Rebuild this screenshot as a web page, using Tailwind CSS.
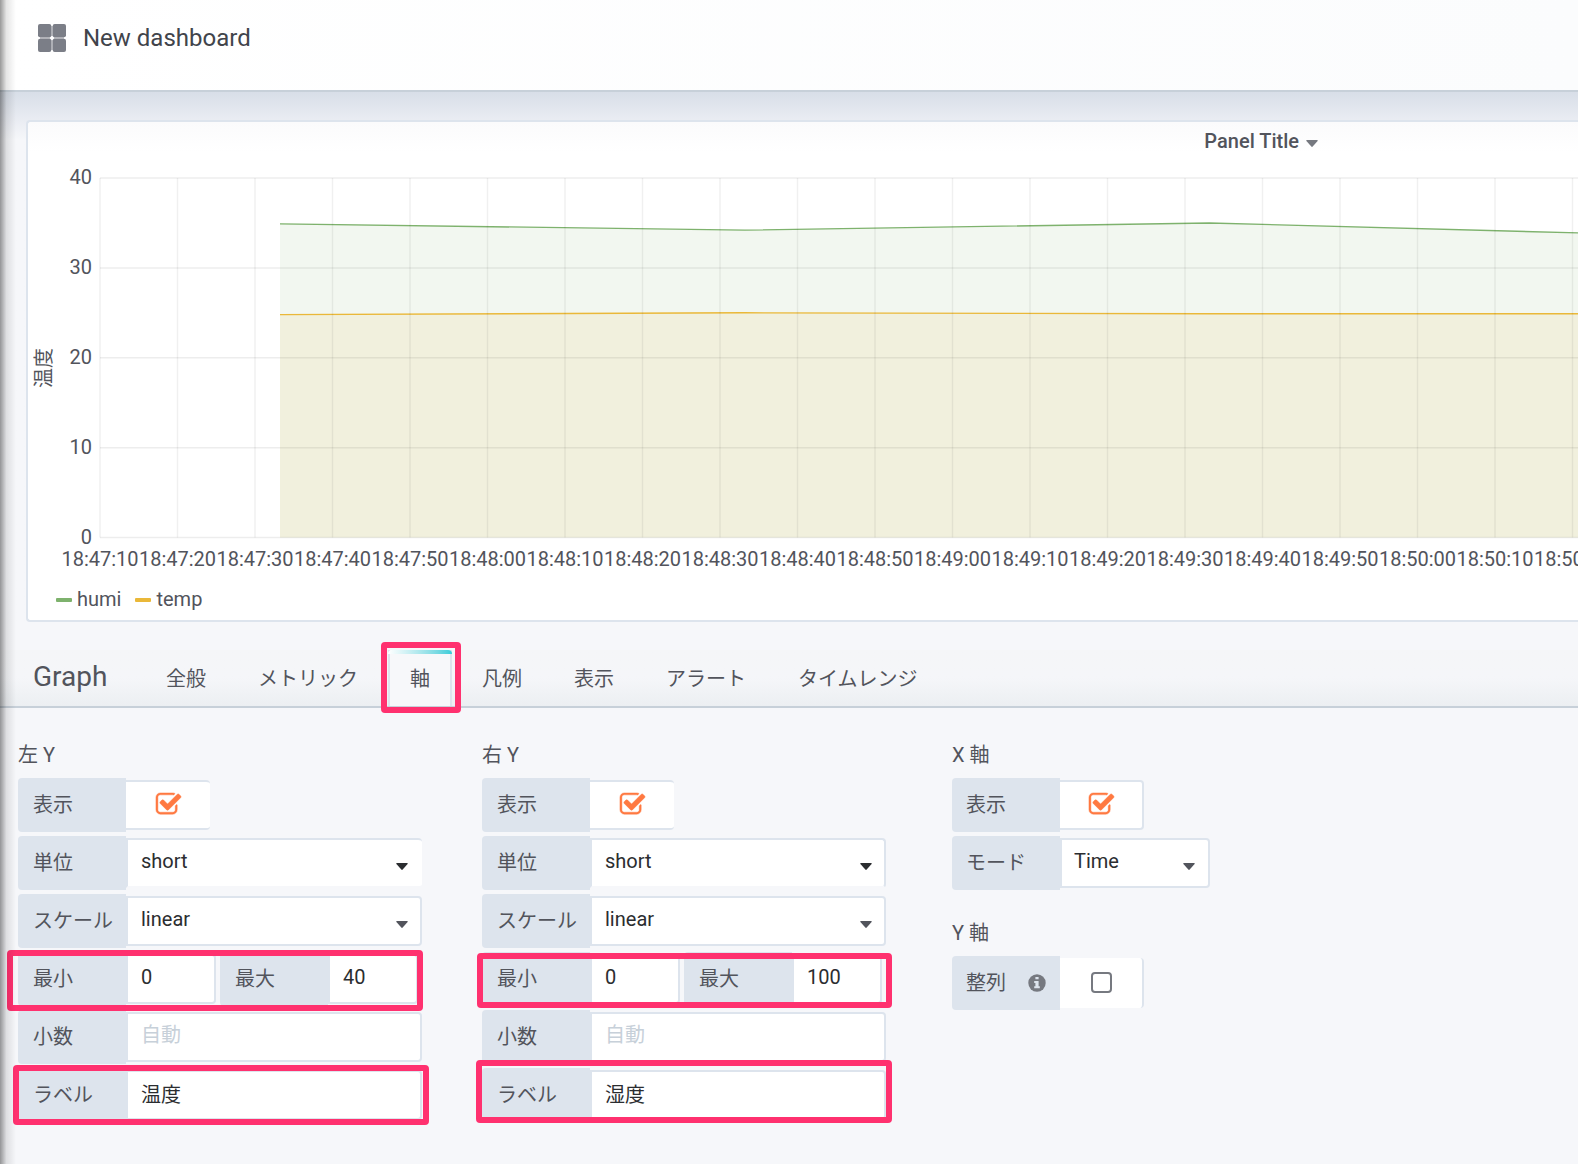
<!DOCTYPE html>
<html lang="ja">
<head>
<meta charset="utf-8">
<meta name="viewport" content="width=device-width, initial-scale=1">
<title>New dashboard</title>
<script src="https://cdn.jsdelivr.net/npm/@tailwindcss/browser@4"></script>
</head>
<body class="relative min-h-screen overflow-x-hidden bg-[#f6f7fa] font-['Roboto','Noto_Sans_CJK_JP',sans-serif] text-xl leading-6 text-[#52545c]">

<svg class="hidden" aria-hidden="true">
  <symbol id="checked" viewBox="0 0 1792 1792"><path fill="currentColor" stroke="currentColor" stroke-width="30" d="M1472 930v318q0 119-84.5 203.5t-203.5 84.5h-832q-119 0-203.5-84.5t-84.5-203.5v-832q0-119 84.5-203.5t203.5-84.5h832q63 0 117 25 15 7 18 23 3 17-9 29l-49 49q-10 10-23 10-3 0-9-2-23-6-45-6h-832q-66 0-113 47t-47 113v832q0 66 47 113t113 47h832q66 0 113-47t47-113v-254q0-13 9-22l64-64q10-10 23-10 6 0 12 3 20 8 20 29zm231-489l-814 814q-24 24-57 24t-57-24l-430-430q-24-24-24-57t24-57l110-110q24-24 57-24t57 24l263 263 647-647q24-24 57-24t57 24l110 110q24 24 24 57t-24 57z"/></symbol>
  <symbol id="caret" viewBox="0 0 12 7"><path fill="currentColor" d="M.8 0h10.400q.8.3.4 1L6.700 6.600q-.7.600-1.400 0L.4 1Q0 .3.8 0z"/></symbol>
</svg>

<header class="flex h-[92px] items-start gap-[17px] border-b-2 border-[#c7d0d9] bg-linear-to-r from-white to-[#fbfcfd] pt-6 pl-[38px]">
  <svg class="h-7 w-7 shrink-0" viewBox="0 0 28 28" aria-hidden="true">
    <path fill="#c3c5c9" d="M2 2h24v24H2z"/><circle cx="14" cy="14" r="2" fill="#fff"/>
    <g fill="#7b7e87"><rect width="13.300" height="13.300" rx="2"/><rect x="14.700" width="13.300" height="13.300" rx="2"/><rect y="14.700" width="13.300" height="13.300" rx="2"/><rect x="14.700" y="14.700" width="13.300" height="13.300" rx="2"/></g>
  </svg>
  <h1 class="text-2xl leading-7 text-[#41444b]">New dashboard</h1>
</header>

<main>
  <div class="bg-linear-to-b from-[#d8dee8] to-[#f6f7fa] to-[48px] pt-7 pl-[26px]">
    <section class="overflow-hidden rounded-l border-2 border-r-0 border-[#dde4ed] bg-linear-to-b from-[#fbfbfc] to-white to-[30px]">
      <div class="flex h-10 items-center justify-end pr-[260px] pb-[2px]">
        <button type="button" class="flex items-center gap-[7px] font-medium">Panel Title
          <svg class="mt-1 h-[7px] w-3 text-[#767980]" aria-hidden="true"><use href="#caret"/></svg>
        </button>
      </div>
      <svg id="chart" class="block h-[416px] w-full" role="img" aria-label="humi / temp" fill="#52545c" font-size="20"></svg>
      <ul class="flex h-[42px] items-center gap-[14px] pl-7">
        <li class="flex items-center gap-[5px]"><span class="mt-[2px] h-1 w-4 rounded-[1px] bg-[#7eb26d]"></span>humi</li>
        <li class="flex items-center gap-[5px]"><span class="mt-[2px] h-1 w-4 rounded-[1px] bg-[#eab839]"></span>temp</li>
      </ul>
    </section>
  </div>

  <div class="mt-7 flex h-[58px] items-stretch border-b-2 border-[#c7d0d9] bg-linear-to-b from-[#f5f6f8] via-[#f5f6f9] to-[#eceff2] pl-[33px]">
    <h2 class="w-[111px] pt-[13px] text-[28px] leading-7">Graph</h2>
    <nav class="flex gap-2 whitespace-nowrap">
      <a href="#" class="flex items-center border-x-2 border-transparent px-5 pt-[2px]">全般</a>
      <a href="#" class="flex items-center border-x-2 border-transparent px-5 pt-[2px]">メトリック</a>
      <a href="#" aria-current="page" class="relative flex items-center border-x-2 border-[#dde4ed] bg-[#f7f8fa] px-5 pt-[2px]">軸
        <span class="absolute -inset-x-[2px] top-0 h-1 rounded-t bg-linear-to-r from-white to-[#35cdd9]"></span>
        <span class="absolute -top-[8px] -left-[9px] h-[71px] w-[80px] rounded border-6 border-[#ff316f]"></span>
      </a>
      <a href="#" class="flex items-center border-x-2 border-transparent px-5 pt-[2px]">凡例</a>
      <a href="#" class="flex items-center border-x-2 border-transparent px-5 pt-[2px]">表示</a>
      <a href="#" class="flex items-center border-x-2 border-transparent px-5 pt-[2px]">アラート</a>
      <a href="#" class="flex items-center border-x-2 border-transparent px-5 pt-[2px]">タイムレンジ</a>
    </nav>
  </div>

  <form class="flex items-start pt-[35px] pb-[42px] pl-[18px]">
    <fieldset class="mr-[60px] flex w-[404px] flex-col gap-1">
      <legend class="mb-[11px] h-6">左 Y</legend>
      <div class="flex h-[54px] items-center">
        <label for="ly-show" class="flex h-full w-[108px] items-center rounded-l bg-[#dde4ed] pl-[15px]">表示</label>
        <span class="relative flex h-[50px] w-[84px] items-center justify-center rounded-r border-y-2 border-[#dde4ed] bg-white pb-[2px]">
          <input id="ly-show" type="checkbox" checked class="absolute inset-0 appearance-none">
          <svg class="pointer-events-none h-[27px] w-[27px] text-[#ff7941]" aria-hidden="true"><use href="#checked"/></svg>
        </span>
      </div>
      <div class="flex h-[54px] items-center">
        <label for="ly-unit" class="flex h-full w-[108px] items-center rounded-l bg-[#dde4ed] pl-[15px]">単位</label>
        <span class="relative h-[50px] flex-1">
          <select id="ly-unit" class="h-full w-full appearance-none rounded-r border-2 border-r-0 border-b-[#f6f7fa] border-t-[#dde4ed] border-l-[#dde4ed] bg-white pb-1 pl-[13px] text-[#2b2d30]"><option>short</option></select>
          <svg class="pointer-events-none absolute top-[25px] right-[14px] h-[7px] w-3 text-[#2b2d30]" aria-hidden="true"><use href="#caret"/></svg>
        </span>
      </div>
      <div class="flex h-[54px] items-center">
        <label for="ly-scale" class="flex h-full w-[108px] items-center rounded-l bg-[#dde4ed] pl-[15px]">スケール</label>
        <span class="relative h-[50px] flex-1">
          <select id="ly-scale" class="h-full w-full appearance-none rounded-r border-2 border-[#dde4ed] bg-white pb-1 pl-[13px] text-[#2b2d30]"><option>linear</option></select>
          <svg class="pointer-events-none absolute top-[25px] right-[14px] h-[7px] w-3" aria-hidden="true"><use href="#caret"/></svg>
        </span>
      </div>
      <div class="relative flex h-[54px] items-center">
        <label for="ly-min" class="flex h-full w-[108px] items-center rounded-l bg-[#dde4ed] pl-[15px]">最小</label>
        <input id="ly-min" type="text" value="0" class="mr-1 h-[50px] w-[90px] rounded-r border-2 border-[#dde4ed] bg-white pb-1 pl-[13px] text-[#2b2d30]">
        <label for="ly-max" class="flex h-full w-[108px] items-center rounded-l bg-[#dde4ed] pl-[15px]">最大</label>
        <input id="ly-max" type="text" value="40" class="h-[50px] w-[90px] rounded-r border-2 border-[#dde4ed] bg-white pb-1 pl-[13px] text-[#2b2d30]">
        <span class="pointer-events-none absolute -top-[2px] -left-[11px] h-[61px] w-[416px] rounded border-6 border-[#ff316f]"></span>
      </div>
      <div class="flex h-[54px] items-center">
        <label for="ly-dec" class="flex h-full w-[108px] items-center rounded-l bg-[#dde4ed] pl-[15px]">小数</label>
        <input id="ly-dec" type="text" placeholder="自動" class="h-[50px] min-w-0 flex-1 rounded-r border-2 border-[#dde4ed] bg-white pb-1 pl-[13px] text-[#2b2d30] placeholder:text-[#c7d0d9]">
      </div>
      <div class="relative flex h-[54px] items-center">
        <label for="ly-label" class="flex h-full w-[108px] items-center rounded-l bg-[#dde4ed] pl-[15px]">ラベル</label>
        <input id="ly-label" type="text" value="温度" class="h-[50px] min-w-0 flex-1 rounded-r border-2 border-[#dde4ed] bg-white pb-1 pl-[13px] text-[#2b2d30]">
        <span class="pointer-events-none absolute -top-[3px] -left-[5px] h-[60px] w-[416px] rounded border-6 border-[#ff316f]"></span>
      </div>
    </fieldset>

    <fieldset class="mr-[66px] flex w-[404px] flex-col gap-1">
      <legend class="mb-[11px] h-6">右 Y</legend>
      <div class="flex h-[54px] items-center">
        <label for="ry-show" class="flex h-full w-[108px] items-center rounded-l bg-[#dde4ed] pl-[15px]">表示</label>
        <span class="relative flex h-[50px] w-[84px] items-center justify-center rounded-r border-y-2 border-[#dde4ed] bg-white pb-[2px]">
          <input id="ry-show" type="checkbox" checked class="absolute inset-0 appearance-none">
          <svg class="pointer-events-none h-[27px] w-[27px] text-[#ff7941]" aria-hidden="true"><use href="#checked"/></svg>
        </span>
      </div>
      <div class="flex h-[54px] items-center">
        <label for="ry-unit" class="flex h-full w-[108px] items-center rounded-l bg-[#dde4ed] pl-[15px]">単位</label>
        <span class="relative h-[50px] flex-1">
          <select id="ry-unit" class="h-full w-full appearance-none rounded-r border-2 border-x-[#dde4ed] border-t-[#dde4ed] border-b-[#f6f7fa] bg-white pb-1 pl-[13px] text-[#2b2d30]"><option>short</option></select>
          <svg class="pointer-events-none absolute top-[25px] right-[14px] h-[7px] w-3 text-[#2b2d30]" aria-hidden="true"><use href="#caret"/></svg>
        </span>
      </div>
      <div class="flex h-[54px] items-center">
        <label for="ry-scale" class="flex h-full w-[108px] items-center rounded-l bg-[#dde4ed] pl-[15px]">スケール</label>
        <span class="relative h-[50px] flex-1">
          <select id="ry-scale" class="h-full w-full appearance-none rounded-r border-2 border-[#dde4ed] bg-white pb-1 pl-[13px] text-[#2b2d30]"><option>linear</option></select>
          <svg class="pointer-events-none absolute top-[25px] right-[14px] h-[7px] w-3" aria-hidden="true"><use href="#caret"/></svg>
        </span>
      </div>
      <div class="relative flex h-[54px] items-center">
        <label for="ry-min" class="flex h-full w-[108px] items-center rounded-l bg-[#dde4ed] pl-[15px]">最小</label>
        <input id="ry-min" type="text" value="0" class="mr-1 h-[50px] w-[90px] rounded-r border-2 border-[#dde4ed] bg-white pb-1 pl-[13px] text-[#2b2d30]">
        <label for="ry-max" class="flex h-full w-[108px] items-center rounded-l bg-[#dde4ed] pl-[15px]">最大</label>
        <input id="ry-max" type="text" value="100" class="h-[50px] w-[90px] rounded-r border-2 border-[#dde4ed] bg-white pb-1 pl-[13px] text-[#2b2d30]">
        <span class="pointer-events-none absolute top-[1px] -left-[5px] h-[55px] w-[415px] rounded border-6 border-[#ff316f]"></span>
      </div>
      <div class="flex h-[54px] items-center">
        <label for="ry-dec" class="flex h-full w-[108px] items-center rounded-l bg-[#dde4ed] pl-[15px]">小数</label>
        <input id="ry-dec" type="text" placeholder="自動" class="h-[50px] min-w-0 flex-1 rounded-r border-2 border-[#dde4ed] bg-white pb-1 pl-[13px] text-[#2b2d30] placeholder:text-[#c7d0d9]">
      </div>
      <div class="relative flex h-[54px] items-center">
        <label for="ry-label" class="flex h-full w-[108px] items-center rounded-l bg-[#dde4ed] pl-[15px]">ラベル</label>
        <input id="ry-label" type="text" value="湿度" class="h-[50px] min-w-0 flex-1 rounded-r border-2 border-[#dde4ed] bg-white pb-1 pl-[13px] text-[#2b2d30]">
        <span class="pointer-events-none absolute -top-[8px] -left-[6px] h-[63px] w-[416px] rounded border-6 border-[#ff316f]"></span>
      </div>
    </fieldset>

    <div class="flex flex-col gap-[31px]">
      <fieldset class="flex flex-col gap-1">
        <legend class="mb-[11px] h-6">X 軸</legend>
        <div class="flex h-[54px] items-center">
          <label for="x-show" class="flex h-full w-[108px] items-center rounded-l bg-[#dde4ed] pl-[14px]">表示</label>
          <span class="relative flex h-[50px] w-[84px] items-center justify-center rounded-r border-2 border-l-0 border-[#dde4ed] bg-white pb-[2px]">
            <input id="x-show" type="checkbox" checked class="absolute inset-0 appearance-none">
            <svg class="pointer-events-none h-[27px] w-[27px] text-[#ff7941]" aria-hidden="true"><use href="#checked"/></svg>
          </span>
        </div>
        <div class="flex h-[54px] items-center">
          <label for="x-mode" class="flex h-full w-[108px] items-center rounded-l bg-[#dde4ed] pl-[14px]">モード</label>
          <span class="relative h-[50px] w-[150px]">
            <select id="x-mode" class="h-full w-full appearance-none rounded-r border-2 border-[#dde4ed] bg-white pb-1 pl-3 text-[#2b2d30]"><option>Time</option></select>
            <svg class="pointer-events-none absolute top-[25px] right-[15px] h-[7px] w-3" aria-hidden="true"><use href="#caret"/></svg>
          </span>
        </div>
      </fieldset>
      <fieldset>
        <legend class="mb-[11px] h-6">Y 軸</legend>
        <div class="flex h-[54px] items-center">
          <label for="y-align" class="flex h-full w-[108px] items-center justify-between rounded-l bg-[#dde4ed] pr-[14px] pl-[14px]">整列
            <svg class="h-[18px] w-[18px]" viewBox="0 0 18 18" aria-hidden="true"><circle cx="9" cy="9" r="8.700" fill="#767980"/><path fill="#dde4ed" d="M7.400 2.900h3.200v2.300H7.400zM6.200 7h4.400v5.200h1.200v2H6.200v-2h1.200V9H6.200z"/></svg>
          </label>
          <span class="relative flex h-[50px] w-[84px] items-center justify-center rounded-r border-r-2 border-[#dde4ed] bg-white pb-[2px]">
            <input id="y-align" type="checkbox" class="h-[21px] w-[21px] appearance-none rounded border-2 border-[#767980]">
          </span>
        </div>
      </fieldset>
    </div>
  </form>
</main>

<div class="pointer-events-none absolute inset-y-0 left-0 w-4 bg-linear-to-r from-black/40 via-black/10 via-40% to-transparent"></div>

<script>
  // Plot area inside the chart: origin, scale and one step of the time axis.
  const left = 72, top0 = 16, bottom = 375.5, step = 77.5;
  const y = v => bottom - v * (bottom - top0) / 40;
  const series = [
    { color: '#7eb26d', values: [34.9, 34.2, 35, 33.6, 34.2] },
    { color: '#eab839', values: [24.8, 25, 24.9, 24.9, 25] },
  ];
  let out = '';
  for (const s of series) {
    const pts = s.values.map((v, i) => `${252 + i * 464.7},${y(v)}`);
    const end = 252 + (s.values.length - 1) * 464.7;
    out += `<polygon points="252,${bottom} ${pts.join(' ')} ${end},${bottom}" fill="${s.color}" fill-opacity=".1"/>`;
    out += `<polyline points="${pts.join(' ')}" fill="none" stroke="${s.color}" stroke-width="1.4"/>`;
  }
  for (let v = 0; v <= 40; v += 10) {
    out += `<line x1="${left}" x2="100%" y1="${y(v)}" y2="${y(v)}" stroke="#000" stroke-opacity=".07" stroke-width="1.5"/>`;
    out += `<text x="64" y="${y(v) + 6}" text-anchor="end">${v}</text>`;
  }
  for (let k = 0; k < 20; k++) {
    const x = left + k * step, t = 18 * 3600 + 47 * 60 + 10 + k * 10;
    const label = [t / 3600, t / 60 % 60, t % 60].map(n => String(Math.floor(n)).padStart(2, '0')).join(':');
    out += `<line x1="${x}" x2="${x}" y1="${top0}" y2="${bottom}" stroke="#000" stroke-opacity=".06" stroke-width="1.5"/>`;
    out += `<text x="${x}" y="404" text-anchor="middle">${label}</text>`;
  }
  out += '<text transform="translate(23 206) rotate(-90)" text-anchor="middle">温度</text>';
  document.getElementById('chart').innerHTML = out;
</script>
</body>
</html>
